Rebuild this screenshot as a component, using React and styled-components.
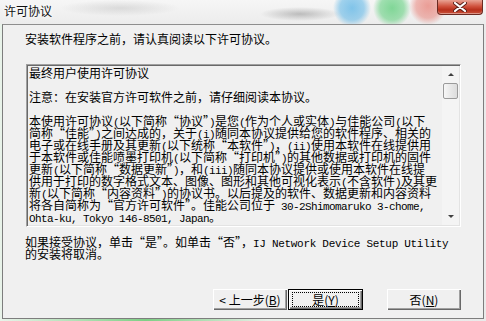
import styled, { createGlobalStyle } from "styled-components";

const GlobalStyle = createGlobalStyle`
  html, body {
    margin: 0;
    padding: 0;
    background: #f0f0f0;
    overflow: hidden;
  }
  body {
    font-family: "Noto Sans CJK SC", sans-serif;
    font-size: 12px;
    color: #000;
  }
`;

// 协议正文（按原窗口逐行换行）
const lines = [
  "本使用许可协议(以下简称“协议”)是您(作为个人或实体)与佳能公司(以下",
  "简称“佳能”)之间达成的，关于(i)随同本协议提供给您的软件程序、相关的",
  "电子或在线手册及其更新(以下统称“本软件”)，(ii)使用本软件在线提供用",
  "于本软件或佳能喷墨打印机(以下简称“打印机”)的其他数据或打印机的固件",
  "更新(以下简称“数据更新”)，和(iii)随同本协议提供或使用本软件在线提",
  "供用于打印的数字格式文本、图像、图形和其他可视化表示(不含软件)及其更",
  "新(以下简称“内容资料”)的协议书。以后提及的软件、数据更新和内容资料",
  "将各自简称为“官方许可软件”。佳能公司位于 30-2Shimomaruko 3-chome,",
  "Ohta-ku, Tokyo 146-8501, Japan。",
];

// 半角字符用等宽字体
const withHalf = (str) =>
  str.split(/([\x20-\x7e]+)/).map((part, i) =>
    /[\x20-\x7e]/.test(part) ? <Half key={i}>{part}</Half> : part
  );

function App() {
  return (
    <Window>
      <GlobalStyle />
      <TitleBar>
        <Title>许可协议</Title>
        <CloseButton>
          <svg width="14" height="10" viewBox="0 0 14 10">
            <path d="M2 1 L12 9 M12 1 L2 9" stroke="#5a2018" strokeWidth="4" strokeLinecap="round" />
            <path d="M2 1 L12 9 M12 1 L2 9" stroke="#fff" strokeWidth="2.2" strokeLinecap="round" />
          </svg>
        </CloseButton>
      </TitleBar>
      <Frame>
        <Heading>安装软件程序之前，请认真阅读以下许可协议。</Heading>
        <TextBox>
          <TextArea>
            <Line>最终用户使用许可协议</Line>
            <Line />
            <Line>注意：在安装官方许可软件之前，请仔细阅读本协议。</Line>
            <Line />
            {lines.map((l, i) => (
              <Line key={i}>{withHalf(l)}</Line>
            ))}
          </TextArea>
          <ScrollBar>
            <Arrow $up />
            <Thumb />
            <Track />
            <Arrow />
          </ScrollBar>
        </TextBox>
        <Notice>
          <Line>
            如果接受协议，单击“是”。如单击“否”，<Half $wide>IJ Network Device Setup Utility</Half>
          </Line>
          <Line>的安装将取消。</Line>
        </Notice>
        <Buttons>
          <Button>
            &lt; 上一步(<u>B</u>)
          </Button>
          <Button $default>
            <Focus>
              是(<u>Y</u>)
            </Focus>
          </Button>
          <Spacer />
          <Button>
            否(<u>N</u>)
          </Button>
        </Buttons>
      </Frame>
    </Window>
  );
}

const Window = styled.div`
  width: 486px;
  height: 321px;
  display: flex;
  flex-direction: column;
  background: linear-gradient(90deg, #e9f3ea 0%, #7fcf86 30%, #e8efe8 55%, #eaeaea 100%);
`;

const TitleBar = styled.div`
  height: 24px;
  display: flex;
  align-items: flex-start;
  justify-content: space-between;
  background:
    radial-gradient(circle at 352px 8px, rgba(90, 180, 230, 0.75) 0, rgba(90, 180, 230, 0.55) 12px, rgba(90, 180, 230, 0) 19px),
    radial-gradient(circle at 392px 8px, rgba(90, 205, 120, 0.75) 0, rgba(90, 205, 120, 0.55) 12px, rgba(90, 205, 120, 0) 19px),
    radial-gradient(circle at 428px 6px, rgba(230, 120, 110, 0.7) 0, rgba(230, 120, 110, 0.5) 12px, rgba(230, 120, 110, 0) 19px),
    radial-gradient(ellipse 40px 7px at 300px 14px, rgba(90, 90, 90, 0.35), rgba(90, 90, 90, 0)),
    radial-gradient(ellipse 60px 8px at 120px 8px, rgba(120, 120, 120, 0.2), rgba(120, 120, 120, 0)),
    linear-gradient(#f6f6f6, #ececec);
`;

const Title = styled.div`
  margin: 3px 0 0 4px;
  font-size: 12px;
  line-height: 16px;
  color: #111;
  text-shadow: 0 0 4px #fff, 0 0 6px #fff;
`;

const CloseButton = styled.div`
  width: 44px;
  height: 14px;
  margin-right: 3px;
  display: flex;
  align-items: center;
  justify-content: center;
  border: 1px solid #6b2a22;
  border-top: none;
  border-radius: 0 0 4px 4px;
  background: linear-gradient(#e9a394, #d0523e 45%, #b8301c 70%, #c9533c);
  box-shadow: inset 0 -1px 0 rgba(255, 255, 255, 0.4);
`;

const Frame = styled.div`
  height: 295px;
  margin: 0 2px;
  box-sizing: border-box;
  border: 1px solid #7d7d7d;
  border-top-color: #8e8e8e;
  background: #f0f0f0;
  display: flex;
  flex-direction: column;
`;

const Heading = styled.div`
  margin: 6px 0 0 22px;
  line-height: 16px;
  white-space: nowrap;
`;

const TextBox = styled.div`
  margin: 17px 0 0 23px;
  width: 435px;
  height: 163px;
  box-sizing: border-box;
  border: 1px solid;
  border-color: #a0a0a0 #ffffff #ffffff #a0a0a0;
  box-shadow: inset 1px 1px 0 #696969, inset -1px -1px 0 #e3e3e3;
  display: flex;
  padding: 1px;
  background: #f0f0f0;
`;

const TextArea = styled.div`
  flex: 1;
  overflow: hidden;
  padding: 1px 0 0 1px;
  font-feature-settings: "fwid";
`;

const Line = styled.div`
  height: 12px;
  line-height: 12px;
  white-space: nowrap;
`;

const Half = styled.span`
  font-family: "Liberation Mono", monospace;
  font-size: 11px;
  letter-spacing: ${(p) => (p.$wide ? "-0.3px" : "-0.6px")};
  font-feature-settings: normal;
`;

const ScrollBar = styled.div`
  width: 17px;
  display: flex;
  flex-direction: column;
  align-items: center;
  background: #f4f4f4;
`;

const Arrow = styled.div`
  height: 17px;
  width: 17px;
  display: flex;
  align-items: center;
  justify-content: center;
  &::after {
    content: "";
    border-left: 3px solid transparent;
    border-right: 3px solid transparent;
    ${(p) =>
      p.$up ? "border-bottom: 3px solid #404040;" : "border-top: 3px solid #404040;"}
  }
`;

const Thumb = styled.div`
  width: 13px;
  height: 14px;
  border: 1px solid #9a9a9a;
  border-radius: 2px;
  background: linear-gradient(90deg, #f7f7f7, #e8e8e8 50%, #dcdcdc);
`;

const Track = styled.div`
  flex: 1;
`;

const Notice = styled.div`
  margin: 9px 0 0 22px;
`;

const Buttons = styled.div`
  margin: 29px 22px 0 0;
  display: flex;
  justify-content: flex-end;
`;

const Spacer = styled.div`
  width: 24px;
`;

const Button = styled.div`
  width: ${(p) => (p.$default ? "75px" : "74px")};
  height: 21px;
  box-sizing: border-box;
  display: flex;
  align-items: center;
  justify-content: center;
  background: #f0f0f0;
  font-size: 12px;
  white-space: nowrap;
  border: ${(p) => (p.$default ? "1px solid #000" : "none")};
  box-shadow: inset 1px 1px 0 #ffffff, inset -1px -1px 0 #696969, inset -2px -2px 0 #a0a0a0;
  margin-left: ${(p) => (p.$default ? "1px" : "0")};
  u {
    text-decoration: underline;
  }
`;

const Focus = styled.div`
  width: 65px;
  height: 13px;
  display: flex;
  align-items: center;
  justify-content: center;
  border: 1px dotted #000;
  line-height: 13px;
`;

export default App;
